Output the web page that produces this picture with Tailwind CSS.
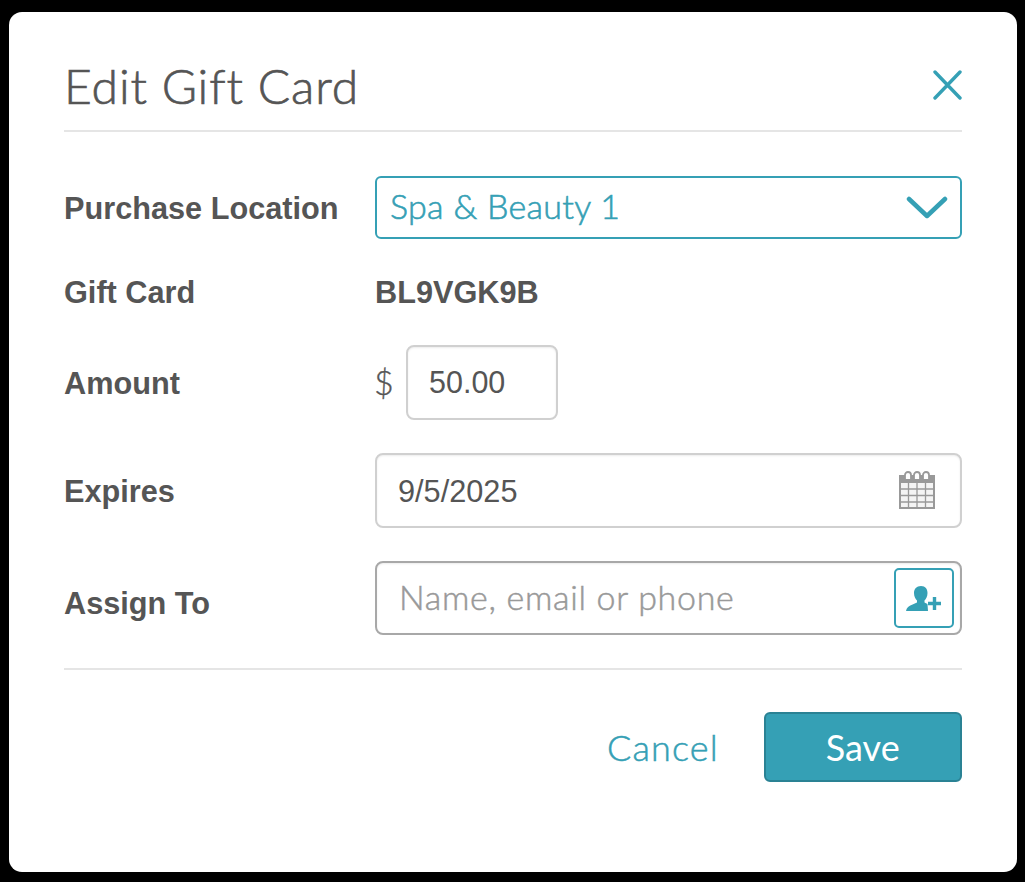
<!DOCTYPE html>
<html lang="en">
<head>
  <meta charset="UTF-8" />
  <title>Edit Gift Card</title>
  <script src="https://cdn.jsdelivr.net/npm/@tailwindcss/browser@4"></script>
</head>
<body class="bg-black h-[882px] overflow-hidden font-['Liberation_Sans',sans-serif] text-[#555]">

  <div class="ml-[9px] mt-[12px] w-[1008px] h-[860px] bg-white rounded-[13px] pl-[55px] pr-[55.5px]">

    <div class="h-[120px] flex items-start justify-between border-b-2 border-[#e5e5e5]">
      <h1 class="mt-[46px] text-[48px] leading-[56px] font-['Lato',sans-serif] font-light [-webkit-text-stroke:0.7px_#555] tracking-[0.9px] whitespace-nowrap">Edit Gift Card</h1>
      <svg class="mt-[58px]" width="29" height="30" viewBox="0 0 29 30" fill="none" stroke="#35a0b5" stroke-width="3.4" stroke-linecap="round">
        <path d="M2 2 L27 28 M27 2 L2 28" />
      </svg>
    </div>

    <div class="mt-[44px] flex items-center h-[63px]">
      <div class="w-[311px] text-[30.7px] font-bold pt-[3px]">Purchase Location</div>
      <div class="flex-1 h-full border-2 border-[#35a0b5] rounded-[6px] flex items-center justify-between pl-[13px] pr-[12px]">
        <span class="text-[34px] text-[#35a0b5] font-['Lato',sans-serif] font-light [-webkit-text-stroke:0.6px_#35a0b5] tracking-[0.3px] pb-[5px]">Spa &amp; Beauty 1</span>
        <svg width="42" height="24" viewBox="0 0 42 24" fill="none" stroke="#35a0b5" stroke-width="4.5" stroke-linecap="round" stroke-linejoin="round">
          <path d="M3 3 L21 20 L39 3" />
        </svg>
      </div>
    </div>

    <div class="mt-[35px] flex items-center h-[36px] pt-[2px] text-[30.7px] font-bold">
      <div class="w-[311px]">Gift Card</div>
      <div>BL9VGK9B</div>
    </div>

    <div class="mt-[35px] flex items-center h-[75px]">
      <div class="w-[311px] text-[30.7px] font-bold pt-[3px]">Amount</div>
      <span class="w-[31px] -ml-[1px] mr-[1px] text-[34px] font-['Lato',sans-serif] font-light [-webkit-text-stroke:0.4px_#555] pb-[3px]">$</span>
      <div class="w-[152px] h-full border-2 border-[#d0d0d0] rounded-[8px] shadow-[inset_0_1px_2px_rgba(0,0,0,0.08)] flex items-center pl-[21px] text-[30.5px]">50.00</div>
    </div>

    <div class="mt-[33px] flex items-center h-[75px]">
      <div class="w-[311px] text-[30.7px] font-bold pt-[3px]">Expires</div>
      <div class="flex-1 h-full border-2 border-[#d0d0d0] rounded-[8px] shadow-[inset_0_1px_2px_rgba(0,0,0,0.08)] flex items-center justify-between pl-[21px] pr-[25px] text-[30.7px]">
        <span class="pt-[3px]">9/5/2025</span>
        <svg class="mb-[2px]" width="36" height="38" viewBox="0 0 36 38" fill="none">
          <rect x="1" y="5" width="34" height="32" fill="#f4f4f4" stroke="#999" stroke-width="2" />
          <rect x="1" y="5" width="34" height="7" fill="#999" />
          <path d="M1 18 H35 M1 24.5 H35 M1 31 H35 M9.5 12 V37 M18 12 V37 M26.5 12 V37" stroke="#999" stroke-width="1.3" />
          <path d="M6 8 V4 a3 3 0 0 1 6 0 V8 M15 8 V4 a3 3 0 0 1 6 0 V8 M24 8 V4 a3 3 0 0 1 6 0 V8" stroke="#999" stroke-width="1.8" fill="#fff" />
        </svg>
      </div>
    </div>

    <div class="mt-[33px] flex items-center h-[74px]">
      <div class="w-[311px] text-[30.7px] font-bold pt-[12px]">Assign To</div>
      <div class="flex-1 h-full border-2 border-[#a8a8a8] rounded-[8px] shadow-[inset_0_1px_2px_rgba(0,0,0,0.08)] flex items-center justify-between pl-[22px] pr-[6px]">
        <span class="text-[34px] text-[#999] font-['Lato',sans-serif] font-light [-webkit-text-stroke:0.5px_#999] tracking-[0.7px] pb-[4px] whitespace-nowrap">Name, email or phone</span>
        <div class="w-[60px] h-[60px] border-2 border-[#35a0b5] rounded-[5px] flex items-center justify-center">
          <svg width="35" height="25" viewBox="0 0 35 25" fill="#35a0b5">
            <path d="M15 0 C19.5 0 21.5 3 21.5 7 C21.5 10.5 20 13 18.5 14.5 L18.5 16.5 L21.5 18 L22 25 L0 25 C0.5 21.5 3 20 6 18.8 L11 16.5 L11 14.5 C9.5 13 8 10.5 8 7 C8 3 10.5 0 15 0 Z" />
            <path d="M26.8 11 H30.2 V15.8 H35 V19.2 H30.2 V24 H26.8 V19.2 H22 V15.8 H26.8 Z" />
          </svg>
        </div>
      </div>
    </div>

    <div class="mt-[33px] border-t-2 border-[#e5e5e5]"></div>

    <div class="mt-[42px] flex items-center justify-end">
      <a class="text-[36px] text-[#35a0b5] font-['Lato',sans-serif] font-light [-webkit-text-stroke:0.5px_#35a0b5] tracking-[1.2px] mr-[45px]">Cancel</a>
      <button class="w-[197.5px] h-[70px] bg-[#35a0b5] border-2 border-[#2a8294] rounded-[6px] text-white text-[36px] font-['Lato',sans-serif]">Save</button>
    </div>
  </div>

</body>
</html>
